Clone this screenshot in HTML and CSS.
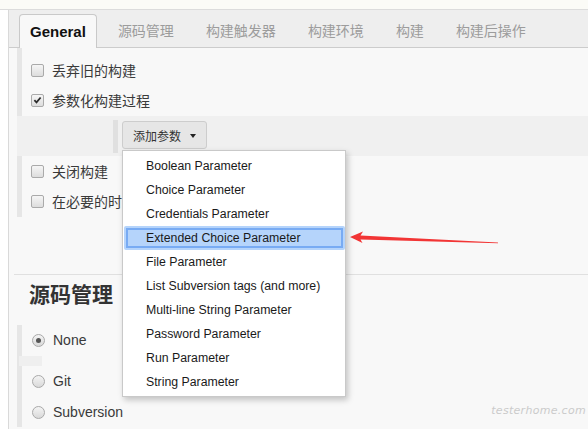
FILE: index.html
```html
<!DOCTYPE html>
<html lang="zh-CN">
<head>
<meta charset="utf-8">
<title>Jenkins 配置</title>
<link rel="stylesheet" href="styles.css">
</head>
<body>
<div class="topstrip"></div>
<div class="main">
  <div class="leftcol"></div>
  <div class="content">
    <div class="tabbar">
      <div class="tab active">General</div>
      <div class="tab">源码管理</div>
      <div class="tab">构建触发器</div>
      <div class="tab">构建环境</div>
      <div class="tab">构建</div>
      <div class="tab">构建后操作</div>
    </div>

    <div class="section general">
      <div class="row"><span class="cb"></span><span class="label">丢弃旧的构建</span></div>
      <div class="row"><span class="cb checked"><svg viewBox="0 0 12 12" width="12" height="12"><path d="M2.6 6.2 L4.9 8.6 L9.4 3.2" fill="none" stroke="#2b2b2b" stroke-width="1.9"/></svg></span><span class="label">参数化构建过程</span></div>
      <div class="band">
        <div class="band-bar"></div>
        <div class="dropdown">
          <div class="btn">添加参数<span class="caret"></span></div>
          <ul class="menu">
            <li class="item">Boolean Parameter</li>
            <li class="item">Choice Parameter</li>
            <li class="item">Credentials Parameter</li>
            <li class="item selected">Extended Choice Parameter</li>
            <li class="item">File Parameter</li>
            <li class="item">List Subversion tags (and more)</li>
            <li class="item">Multi-line String Parameter</li>
            <li class="item">Password Parameter</li>
            <li class="item">Run Parameter</li>
            <li class="item">String Parameter</li>
          </ul>
        </div>
      </div>
      <div class="row"><span class="cb"></span><span class="label">关闭构建</span></div>
      <div class="row"><span class="cb"></span><span class="label">在必要的时候并发构建</span></div>
    </div>

    <div class="sep"></div>
    <h2 class="heading">源码管理</h2>

    <div class="section scm">
      <div class="row radio-row"><span class="radio on"></span><span class="label latin">None</span></div>
      <div class="strip"></div>
      <div class="row radio-row"><span class="radio"></span><span class="label latin">Git</span></div>
      <div class="row radio-row last"><span class="radio"></span><span class="label latin">Subversion</span></div>
    </div>
  </div>
</div>

<svg class="arrow" viewBox="0 0 152 18" width="152" height="18">
  <polygon points="2,8 15,2.6 12.5,6.6 150,13.6 150,14.3 12.5,10.6 14.5,14" fill="#f23535"/>
</svg>
<div class="watermark">testerhome.com</div>
</body>
</html>
```

FILE: styles.css
```css
* { box-sizing: border-box; }

html, body {
  margin: 0;
  padding: 0;
}

body {
  width: 588px;
  height: 429px;
  overflow: hidden;
  position: relative;
  background: #ffffff;
  font-family: "Liberation Sans", "Noto Sans CJK SC", sans-serif;
  color: #333;
}

.topstrip {
  height: 10px;
  background: #fbfbf7;
  border-bottom: 1px solid #dcdcdc;
}

.main {
  display: flex;
  height: 419px;
}

.leftcol {
  width: 9px;
  background: #ffffff;
  border-right: 1px solid #d9d9d9;
  flex: none;
}

.content {
  flex: 1;
  background: #f8f8f8;
  min-width: 0;
}

/* tabs */
.tabbar {
  height: 38px;
  background: #eeeeee;
  border-bottom: 1px solid #cccccc;
  display: flex;
  align-items: flex-end;
  gap: 10px;
  padding-left: 10px;
}

.tab {
  height: 34px;
  line-height: 34px;
  padding: 0 11px;
  font-size: 14px;
  color: #9c9c9c;
  font-family: "Noto Sans CJK SC", sans-serif;
  white-space: nowrap;
}

.tab.active {
  font-family: "Liberation Sans", sans-serif;
  font-size: 15px;
  font-weight: bold;
  color: #111;
  background: #f8f8f8;
  border: 1px solid #c9c9c9;
  border-bottom: none;
  border-radius: 4px 4px 0 0;
  margin-bottom: -1px;
  padding: 0 10px;
  line-height: 33px;
}

/* sections */
.section {
  margin-left: 8px;
  border-left: 5px solid #e6e6e6;
}

.general {
  padding-top: 7px;
  padding-bottom: 1px;
}

.row {
  height: 30px;
  display: flex;
  align-items: center;
  padding-left: 9px;
}

.label {
  margin-left: 8px;
  font-size: 14px;
  font-family: "Noto Sans CJK SC", sans-serif;
  color: #3a3a3a;
  line-height: 20px;
  white-space: nowrap;
}

.label.latin {
  font-family: "Liberation Sans", sans-serif;
  margin-left: 8px;
}

.cb {
  width: 13px;
  height: 13px;
  border: 1px solid #aaaaaa;
  border-radius: 2px;
  background: linear-gradient(#f6f6f6, #dddddd);
  display: flex;
  align-items: center;
  justify-content: center;
  flex: none;
}

.cb svg { display: block; }

.band {
  margin-top: 1px;
  margin-left: -5px;
  height: 40px;
  background: #f0f0f0;
  display: flex;
  padding-left: 96px;
  padding-top: 5px;
}

.band-bar {
  width: 5px;
  height: 33px;
  margin-top: -1px;
  background: #e0e0e0;
  margin-right: 4px;
}

.dropdown {
  position: relative;
  height: 28px;
}

.btn {
  height: 28px;
  display: flex;
  align-items: center;
  padding: 0 10px;
  border: 1px solid #cdcdcd;
  border-radius: 3px;
  background: #e6e6e6;
  font-size: 12px;
  font-family: "Noto Sans CJK SC", sans-serif;
  color: #333;
  white-space: nowrap;
}

.caret {
  width: 0;
  height: 0;
  border-left: 3.5px solid transparent;
  border-right: 3.5px solid transparent;
  border-top: 4px solid #222;
  margin-left: 9px;
  margin-top: 1px;
}

.menu {
  position: absolute;
  top: calc(100% + 1px);
  left: 0;
  width: 224px;
  margin: 0;
  padding: 3px 0 2px;
  list-style: none;
  background: #ffffff;
  border: 1px solid #c9c9c9;
  box-shadow: 2px 3px 6px rgba(0, 0, 0, 0.22);
  z-index: 5;
}

.item {
  height: 24px;
  line-height: 24px;
  padding-left: 23px;
  font-family: "Liberation Sans", sans-serif;
  font-size: 12.3px;
  color: #1a1a1a;
  white-space: nowrap;
}

.item.selected {
  margin-left: 1px;
  padding-left: 22px;
  background: #b5d4fb;
  outline: 2px solid #78abf3;
  outline-offset: -4px;
  border-radius: 2px;
}

.sep {
  margin-top: 57px;
  margin-left: 5px;
  height: 1px;
  background: #e0e0e0;
}

.heading {
  margin: 3px 0 0 20px;
  height: 30px;
  line-height: 30px;
  font-size: 21px;
  font-weight: bold;
  font-family: "Noto Sans CJK SC", sans-serif;
  color: #333;
}

.scm {
  margin-top: 17px;
}

.radio-row {
  padding-left: 10px;
}

.radio-row.last {
  margin-top: 1px;
}

.radio {
  width: 13px;
  height: 13px;
  border-radius: 50%;
  border: 1px solid #a9a9a9;
  background: linear-gradient(#f4f4f4, #d9d9d9);
  display: flex;
  align-items: center;
  justify-content: center;
  flex: none;
}

.radio.on::after {
  content: "";
  width: 5px;
  height: 5px;
  border-radius: 50%;
  background: #555;
}

.strip {
  margin-top: 1px;
  margin-left: -3px;
  width: 23px;
  height: 10px;
  background: #efefef;
}

/* overlays */
.arrow {
  position: absolute;
  left: 348px;
  top: 229px;
}

.watermark {
  position: absolute;
  right: 2px;
  top: 404px;
  font-family: "DejaVu Sans", sans-serif;
  font-style: italic;
  font-size: 11px;
  letter-spacing: 0.3px;
  color: #cbcbcb;
}
```
